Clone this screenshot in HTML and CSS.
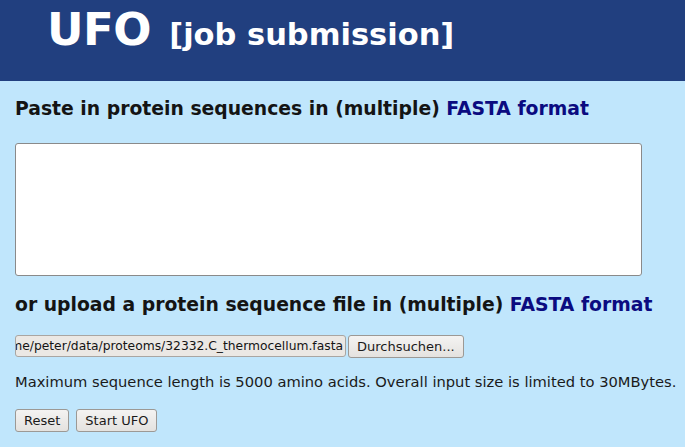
FILE: index.html
```html
<!DOCTYPE html>
<html lang="en">
<head>
    <meta charset="UTF-8">
    <meta name="viewport" content="width=device-width, initial-scale=1.0">
    <title>UFO job submission</title>
    <link rel="stylesheet" href="styles.css">
</head>
<body>
    <div id="header">
        <h1>UFO <span class="sub">[job submission]</span></h1>
    </div>
    <form id="main">
        <h2>Paste in protein sequences in (multiple) <a href="#">FASTA format</a></h2>
        <textarea class="seq"></textarea>
        <h2 class="upload">or upload a protein sequence file in (multiple) <a href="#">FASTA format</a></h2>
        <div class="fileRow">
            <div class="fileName"><span>/home/peter/data/proteoms/32332.C_thermocellum.fasta</span></div>
            <button type="button" class="btn">Durchsuchen...</button>
        </div>
        <p class="info">Maximum sequence length is 5000 amino acids. Overall input size is limited to 30MBytes.</p>
        <div class="actions">
            <button type="reset" class="btn">Reset</button>
            <button type="button" class="btn">Start UFO</button>
        </div>
    </form>
</body>
</html>
```
FILE: styles.css
```css
body {
    margin: 0;
    background-color: #c0e6fc;
    font-family: "DejaVu Sans", sans-serif;
    color: #141414;
}
#header {
    background-color: #213f7f;
    height: 81px;
    padding-left: 47px;
    box-sizing: border-box;
}
#header h1 {
    margin: 0;
    padding-top: 2px;
    color: #fff;
    font-family: "DejaVu Sans", sans-serif;
    font-size: 45px;
    font-weight: bold;
    line-height: 56px;
    letter-spacing: -0.5px;
}
#header .sub {
    font-size: 30.5px;
    margin-left: 3px;
    letter-spacing: 0;
}
#main {
    padding: 0 15px;
}
h2 {
    margin: 0;
    padding-top: 16px;
    font-size: 18.8px;
    font-weight: bold;
    line-height: 24px;
}
h2 a {
    color: #0b0b80;
    text-decoration: none;
}
h2.upload {
    padding-top: 17px;
}
textarea.seq {
    display: block;
    width: 627px;
    height: 133px;
    margin-top: 22px;
    box-sizing: border-box;
    border: 1px solid #8a8a8a;
    border-radius: 3px;
    background: #fff;
    resize: none;
}
.fileRow {
    display: flex;
    gap: 2px;
    margin-top: 18px;
    height: 22px;
}
.fileName {
    width: 331px;
    box-sizing: border-box;
    display: flex;
    justify-content: flex-end;
    overflow: hidden;
    white-space: nowrap;
    background: #ebe8e4;
    border: 1px solid #a9a6a2;
    border-radius: 3px;
    font-size: 12.3px;
    line-height: 20px;
    padding-right: 2px;
}
.btn {
    font-family: "DejaVu Sans", sans-serif;
    font-size: 13px;
    color: #1a1a1a;
    height: 23px;
    padding: 0 8px;
    background: linear-gradient(#f4f3f2, #e4e2df);
    border: 1px solid #9c9995;
    border-radius: 3px;
}
.info {
    margin: 16px 0 0;
    font-size: 14.7px;
    line-height: 18px;
    white-space: nowrap;
    color: #1a1a1a;
}
.actions {
    display: flex;
    gap: 7px;
    margin-top: 18px;
}
```
